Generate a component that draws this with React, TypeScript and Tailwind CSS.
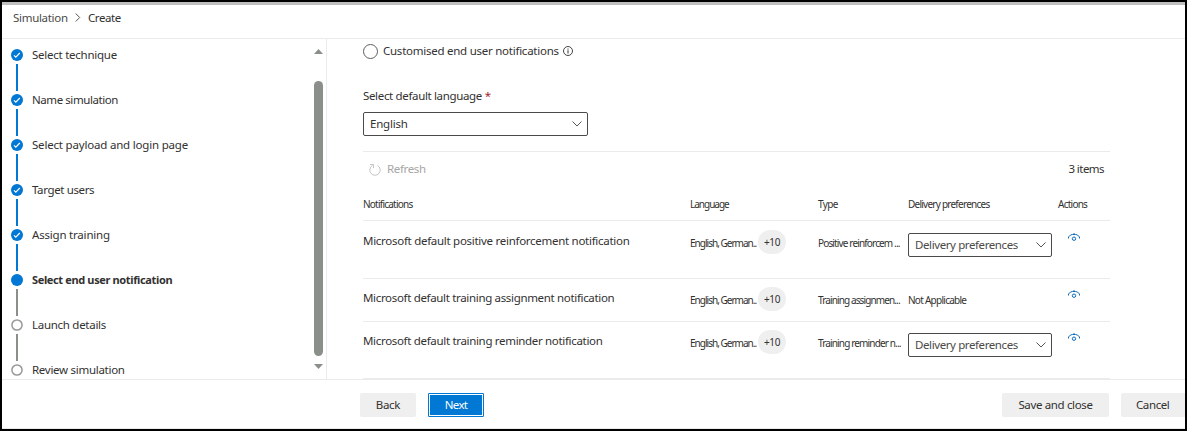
import React from "react";

type StepState = "done" | "current" | "todo";

const steps: { label: string; state: StepState; text: string }[] = [
  { label: "Select technique", state: "done", text: "tracking-[-0.25px]" },
  { label: "Name simulation", state: "done", text: "tracking-[-0.43px]" },
  { label: "Select payload and login page", state: "done", text: "tracking-[-0.19px]" },
  { label: "Target users", state: "done", text: "tracking-[-0.37px]" },
  { label: "Assign training", state: "done", text: "tracking-[-0.2px]" },
  { label: "Select end user notification", state: "current", text: "text-[11px] font-bold tracking-[-0.36px]" },
  { label: "Launch details", state: "todo", text: "tracking-[-0.28px]" },
  { label: "Review simulation", state: "todo", text: "tracking-[-0.28px]" },
];

const rows = [
  { name: "Microsoft default positive reinforcement notification", nameText: "tracking-[-0.28px]", type: "Positive reinforcem ...", typeText: "tracking-[-0.85px]", select: true, height: "h-[58px]", pad: "pt-[9px]" },
  { name: "Microsoft default training assignment notification", nameText: "tracking-[-0.33px]", type: "Training assignmen...", typeText: "tracking-[-0.88px]", select: false, height: "h-[43px]", pad: "pt-[8px]" },
  { name: "Microsoft default training reminder notification", nameText: "tracking-[-0.32px]", type: "Training reminder n...", typeText: "tracking-[-0.85px]", select: true, height: "h-[57px]", pad: "pt-[8px]" },
];

function StepMark({ state }: { state: StepState }) {
  return (
    <svg width="12" height="12" viewBox="0 0 12 12" className="block shrink-0">
      {state === "todo" ? (
        <circle cx="6" cy="6" r="5.1" fill="#fff" stroke="#979997" strokeWidth="1.5" />
      ) : (
        <circle cx="6" cy="6" r="6" fill="#0078d4" />
      )}
      {state === "done" && <path d="M3 6.4 4.8 8.1 8.8 4" fill="none" stroke="#fff" strokeWidth="1.2" />}
    </svg>
  );
}

function Chevron() {
  return (
    <svg width="10" height="6" viewBox="0 0 10 6" className="block shrink-0">
      <path d="M.5.5 5 5 9.5.5" fill="none" stroke="#444" strokeWidth="0.9" />
    </svg>
  );
}

function Eye() {
  return (
    <svg width="12" height="8" viewBox="0 0 12 8" className="block">
      <path d="M.5 5.500V4L2.500 2 4.500 1.500H7.500L9.500 2 11.500 4V5.500M6 0V1.500" fill="none" stroke="#0f6cbd" strokeWidth="1" />
      <circle cx="6" cy="5.700" r="1.700" fill="none" stroke="#0f6cbd" strokeWidth="1" />
    </svg>
  );
}

export default function App() {
  return (
    <div className="flex h-[431px] w-[1187px] flex-col overflow-hidden border-2 border-black bg-white font-['Noto_Sans','Open_Sans',sans-serif] text-[11.5px] leading-[16px] whitespace-nowrap text-[#323130]">
      <div className="h-[3px] shrink-0 bg-[#bfbfbf]" />
      <header className="flex h-[34px] shrink-0 items-start border-b border-[#ebebeb] pt-[5px] pl-[11px]">
        <span className="w-[62px] tracking-[-0.3px] text-[#4b4a48]">Simulation</span>
        <svg width="6" height="9" viewBox="0 0 6 9" className="mt-[3px] block">
          <path d="M.7.500 4.700 4.500.7 8.500" fill="none" stroke="#555" strokeWidth="1" />
        </svg>
        <span className="ml-[7px] tracking-[-0.45px]">Create</span>
      </header>

      <div className="flex h-[340px] shrink-0 overflow-hidden">
        <aside className="flex w-[325px] shrink-0 border-r border-[#ebebeb]">
          <ol className="w-[312px] shrink-0 pt-[10px] pl-[9px]">
            {steps.map((s, i) => (
              <li key={s.label} className="flex h-[45px] gap-[9px]">
                <div className="flex w-3 flex-col items-center">
                  <StepMark state={s.state} />
                  {i < steps.length - 1 && (
                    <div className={`mt-[3px] h-[27px] w-[2px] ${s.state === "done" ? "bg-[#0078d4]" : "bg-[#8a8f8a]"}`} />
                  )}
                </div>
                <span className={`-mt-[2px] ${s.text}`}>{s.label}</span>
              </li>
            ))}
          </ol>
          <div className="flex w-[9px] flex-col items-center pt-[10px]">
            <svg width="9" height="5" viewBox="0 0 9 5" className="block">
              <path d="M0 5 4.500 0 9 5Z" fill="#8a8f8a" />
            </svg>
            <div className="mt-[27px] h-[275px] w-[9px] rounded-full bg-[#8a8f8a]" />
            <svg width="9" height="5" viewBox="0 0 9 5" className="mt-[8px] block">
              <path d="M0 0 4.500 5 9 0Z" fill="#8a8f8a" />
            </svg>
          </div>
        </aside>

        <main className="w-[783px] shrink-0 pl-9">
          <div className="flex h-[24px] items-center">
            <div className="h-[15px] w-[15px] rounded-full border border-[#605e5c]" />
            <span className="ml-[5px] tracking-[-0.25px]">Customised end user notifications</span>
            <svg width="10" height="10" viewBox="0 0 10 10" className="ml-1 block">
              <circle cx="5" cy="5" r="4.500" fill="none" stroke="#323130" strokeWidth="0.9" />
              <path d="M5 4.200V7.500M5 2.500V3.500" stroke="#323130" strokeWidth="1" />
            </svg>
          </div>
          <div className="mt-[25px] h-[24px]">
            <span className="tracking-[-0.34px]">Select default language <span className="text-[#a4262c]">*</span></span>
          </div>
          <div className="flex h-[24px] w-[225px] items-center justify-between rounded-[2px] border border-[#4b4a48] pr-[5px] pl-[6px]">
            <span className="tracking-[-0.2px]">English</span>
            <Chevron />
          </div>

          <div className="mt-[15px] flex h-[35px] items-center justify-between border-t border-[#ebebeb] pr-[6px] pl-[6px]">
            <div className="flex items-center text-[#a6a6a4]">
              <svg width="12" height="13" viewBox="0 0 12 13" className="block">
                <path d="M3.500 2.500A5.200 5.200 0 1 0 8.500 2.500M1 1.500H4.500V5" fill="none" stroke="#c4c4c4" strokeWidth="1" />
              </svg>
              <span className="ml-[6px] pb-px tracking-[-0.35px]">Refresh</span>
            </div>
            <span className="tracking-[-0.55px]">3 items</span>
          </div>

          <div className="grid h-[35px] grid-cols-[327px_128px_90px_150px_52px] items-center border-b border-[#ebebeb] pt-px text-[10px]">
            <span className="tracking-[-0.77px]">Notifications</span>
            <span className="tracking-[-1px]">Language</span>
            <span className="tracking-[-0.65px]">Type</span>
            <span className="tracking-[-0.75px]">Delivery preferences</span>
            <span className="tracking-[-0.75px]">Actions</span>
          </div>

          {rows.map((r) => (
            <div
              key={r.name}
              className={`grid grid-cols-[327px_128px_90px_150px_52px] items-start border-b border-[#ebebeb] text-[10px] ${r.height} ${r.pad}`}
            >
              <span className={`mt-[3px] text-[11.5px] ${r.nameText}`}>{r.name}</span>
              <div className="flex items-center">
                <span className="w-[68px] pt-px tracking-[-0.98px]">English, German..</span>
                <span className="flex h-[24px] w-[28px] items-center justify-center rounded-full bg-[#efefef] tracking-[-0.4px]">+10</span>
              </div>
              <span className={`mt-[5px] ${r.typeText}`}>{r.type}</span>
              {r.select ? (
                <div className="mt-[3px] flex h-[24px] w-[144px] items-center justify-between rounded-[2px] border border-[#4b4a48] pr-[5px] pl-[6px] text-[11.5px] text-[#4b4a48]">
                  <span className="tracking-[-0.4px]">Delivery preferences</span>
                  <Chevron />
                </div>
              ) : (
                <span className="mt-[5px] tracking-[-0.73px]">Not Applicable</span>
              )}
              <div className="mt-[3px] ml-[10px]">
                <Eye />
              </div>
            </div>
          ))}
        </main>
      </div>

      <footer className="flex h-[50px] shrink-0 items-start border-y border-[#ebebeb] pt-[13px] pl-[358px]">
        <button className="h-[24px] w-[56px] shrink-0 rounded-[2px] bg-[#efefef] tracking-[-0.3px]">Back</button>
        <button className="ml-[12px] h-[24px] w-[56px] shrink-0 rounded-[1px] border border-[#0078d4] bg-[#0078d4] p-0 tracking-[-0.7px] text-white">
          <span className="flex h-full items-center justify-center border border-white">Next</span>
        </button>
        <button className="ml-[518px] h-[24px] w-[107px] shrink-0 rounded-[2px] bg-[#efefef] tracking-[-0.35px]">Save and close</button>
        <button className="ml-[12px] h-[24px] w-[72px] shrink-0 rounded-l-[2px] bg-[#efefef] pl-[15px] text-left tracking-[-0.4px]">Cancel</button>
      </footer>
    </div>
  );
}
